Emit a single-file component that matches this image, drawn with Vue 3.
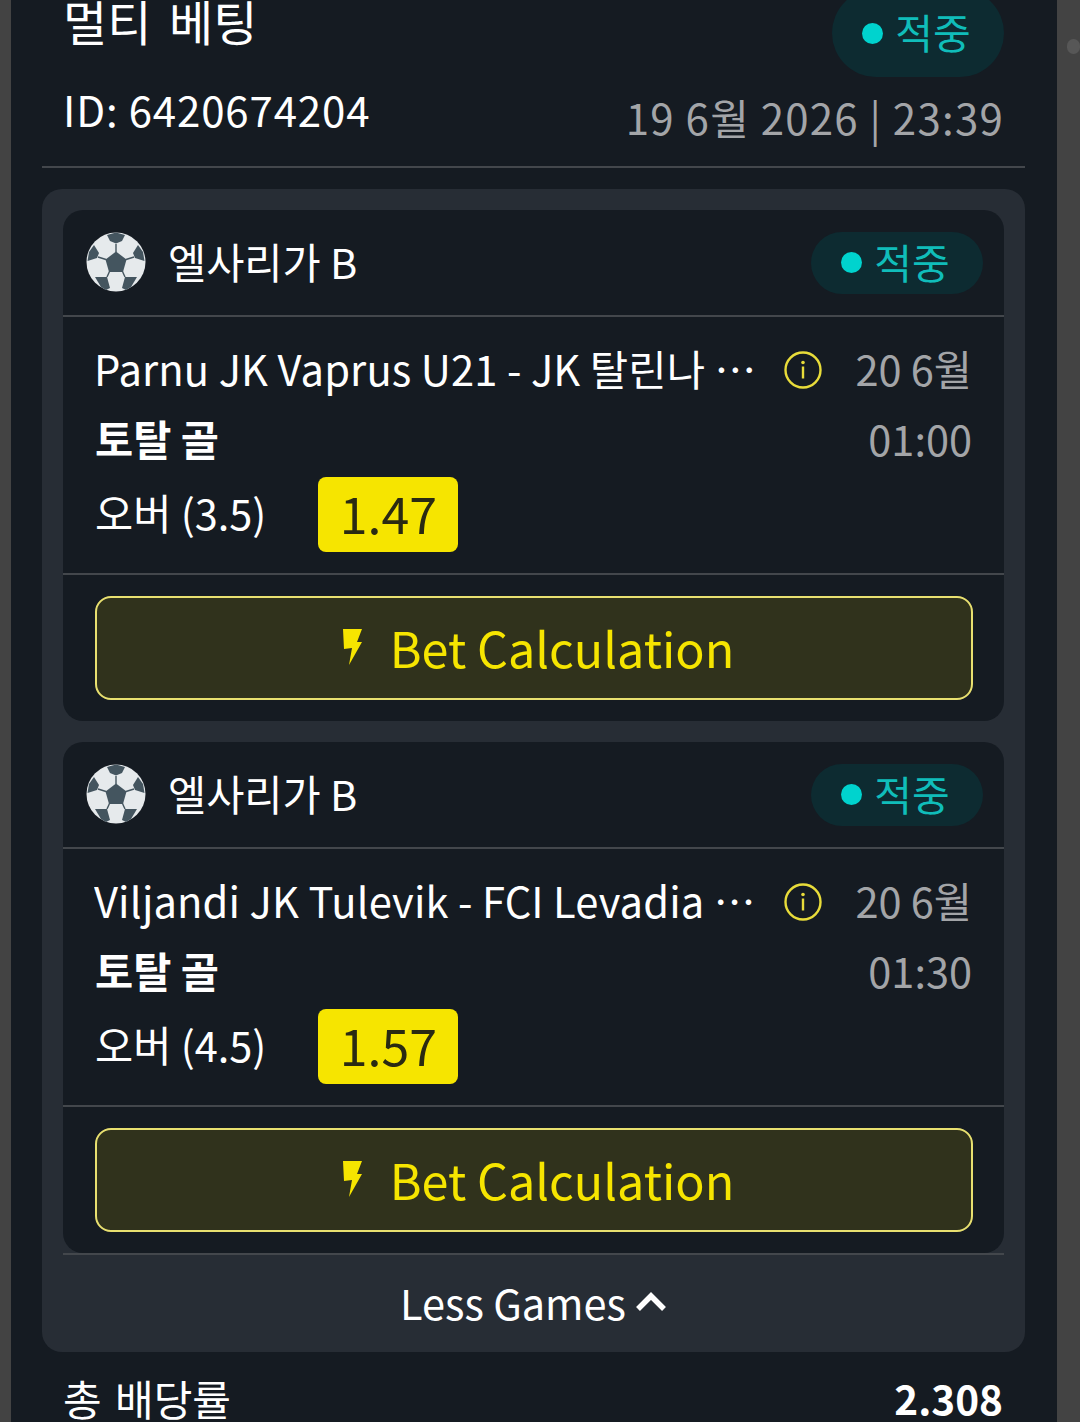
<template>
  <div class="page">
    <div class="panel">
      <div class="head">
        <div class="head-top">
          <h2 class="title">멀티 베팅</h2>
          <div class="status status-big"><span class="dot"></span>적중</div>
        </div>
        <div class="head-bottom">
          <span class="bet-id">ID: 6420674204</span>
          <span class="bet-date">19 6월 2026 | 23:39</span>
        </div>
      </div>

      <div class="games">
        <div v-for="game in games" :key="game.name" class="game">
          <div class="game-head">
            <svg class="ball" viewBox="-30 -30 60 60">
              <circle r="29.5" fill="#e6eaec" />
              <g fill="#44555f">
                <polygon points="0,-10.5 10.5,-2.5 7,10 -7,10 -10.5,-2.5" />
                <polygon points="-9,-27 0,-29.5 9,-27 6,-21 0,-18.5 -6,-21" />
                <polygon points="-28.5,-1 -27,-10 -22,-17 -17,-9 -19,-4" />
                <polygon points="28.5,-1 27,-10 22,-17 17,-9 19,-4" />
                <polygon points="-21,15 -9,15 -6,26 -10,28 -15,25" />
                <polygon points="21,15 9,15 6,26 10,28 15,25" />
              </g>
              <g stroke="#44555f" stroke-width="1.4">
                <line x1="0" y1="-18" x2="0" y2="-10" />
                <line x1="-10" y1="-2.5" x2="-18" y2="-5" />
                <line x1="10" y1="-2.5" x2="18" y2="-5" />
                <line x1="-6.5" y1="9.5" x2="-9" y2="15" />
                <line x1="6.5" y1="9.5" x2="9" y2="15" />
              </g>
            </svg>
            <span class="league">엘사리가 B</span>
            <div class="status"><span class="dot"></span>적중</div>
          </div>

          <div class="game-body">
            <div class="game-info">
              <div class="name-row">
                <span class="name">{{ game.name }}</span>
                <svg class="info" viewBox="0 0 38 38">
                  <circle cx="19" cy="19" r="17.5" fill="none" stroke="#e8dc3a" stroke-width="2.4" />
                  <circle cx="19" cy="11.5" r="1.8" fill="#e8dc3a" />
                  <rect x="17.8" y="15.5" width="2.4" height="12" fill="#e8dc3a" />
                </svg>
              </div>
              <div class="market">토탈 골</div>
              <div class="pick-row">
                <span class="pick">{{ game.pick }}</span>
                <span class="odds">{{ game.odds }}</span>
              </div>
            </div>
            <div class="game-time">
              <span>20 6월</span>
              <span>{{ game.time }}</span>
            </div>
          </div>

          <div class="game-foot">
            <button class="calc-btn">
              <svg class="bolt" viewBox="0 0 20 36">
                <polygon points="0,0 19,0 14,13 19,13 6,36 9,19 1,20" fill="#f6e500" />
              </svg>
              Bet Calculation
            </button>
          </div>
        </div>

        <div class="less">
          <span>Less Games</span>
          <svg class="chevron" viewBox="0 0 30 20">
            <polyline points="2,17 15,4 28,17" fill="none" stroke="#fff" stroke-width="5.5" />
          </svg>
        </div>
      </div>

      <div class="total">
        <span class="total-label">총 배당률</span>
        <b>2.308</b>
      </div>
    </div>
    <div class="scroll-dot"></div>
  </div>
</template>

<script setup>
const games = [
  { name: 'Parnu JK Vaprus U21 - JK 탈린나 칼레', pick: '오버 (3.5)', odds: '1.47', time: '01:00' },
  { name: 'Viljandi JK Tulevik - FCI Levadia U21', pick: '오버 (4.5)', odds: '1.57', time: '01:30' }
]
</script>

<style scoped>
.page {
  width: 1080px;
  height: 1422px;
  overflow: hidden;
  position: relative;
  background: #434343;
  padding-left: 11px;
  box-sizing: border-box;
  font-family: "Noto Sans CJK KR", "Noto Sans", sans-serif;
  color: #fff;
}
.panel {
  width: 1046px;
  height: 1422px;
  background: #151b22;
  padding: 0 32px 0 31px;
  box-sizing: border-box;
}
.head {
  border-bottom: 2px solid #43474c;
  padding: 0 21px 0 21px;
  height: 168px;
  box-sizing: border-box;
}
.head-top {
  display: flex;
  justify-content: space-between;
  align-items: flex-start;
}
.title {
  margin: -13px 0 0;
  font-size: 48px;
  font-weight: 400;
  line-height: 66px;
  word-spacing: 7px;
}
.head-bottom {
  display: flex;
  justify-content: space-between;
  align-items: flex-start;
  margin-top: 6px;
  font-size: 42px;
  line-height: 52px;
}
.bet-id {
  letter-spacing: 0.85px;
}
.bet-date {
  color: #a3a5a8;
  letter-spacing: 1.25px;
  margin-top: 8px;
}
.status {
  width: 172px;
  height: 62px;
  border-radius: 31px;
  background: #0d2b31;
  color: #10bdba;
  display: flex;
  align-items: center;
  justify-content: center;
  gap: 12px;
  font-size: 41px;
  margin-left: auto;
  padding-bottom: 4px;
  box-sizing: border-box;
}
.status-big {
  height: 88px;
  border-radius: 44px;
  margin-top: -11px;
}
.dot {
  width: 21px;
  height: 21px;
  border-radius: 50%;
  background: #00d3ce;
  margin-left: -3px;
  margin-top: 4px;
}
.games {
  margin-top: 21px;
  background: #272d35;
  border-radius: 20px;
  padding: 21px 21px 0;
  height: 1163px;
  box-sizing: border-box;
}
.game {
  background: #151b22;
  border-radius: 20px;
  height: 511px;
  margin-bottom: 21px;
}
.game:nth-child(2) {
  margin-bottom: 0;
}
.game-head {
  display: flex;
  align-items: center;
  height: 107px;
  box-sizing: border-box;
  padding: 0 21px 0 23px;
  border-bottom: 2px solid #43474c;
}
.ball {
  width: 60px;
  height: 60px;
  margin-right: 22px;
  margin-bottom: 2px;
}
.league {
  font-size: 41.5px;
  margin-bottom: 3px;
}
.game-body {
  display: flex;
  justify-content: space-between;
  height: 258px;
  box-sizing: border-box;
  padding: 16px 32px 0 31px;
  border-bottom: 2px solid #43474c;
  font-size: 41.5px;
}
.game-info {
  display: flex;
  flex-direction: column;
}
.name-row {
  display: flex;
  align-items: center;
  height: 70px;
  gap: 22px;
}
.name {
  width: 668px;
  font-size: 41.7px;
  letter-spacing: 0.1px;
  overflow: hidden;
  white-space: nowrap;
  text-overflow: ellipsis;
}
.info {
  width: 38px;
  height: 38px;
  margin-top: 3px;
}
.market {
  font-weight: 700;
  height: 70px;
  line-height: 70px;
  padding-left: 1px;
}
.pick-row {
  display: flex;
  align-items: center;
  gap: 52px;
  margin-top: 4px;
}
.pick {
  margin: -5px 0 0 1px;
}
.odds {
  width: 140px;
  height: 75px;
  background: #f6e500;
  border-radius: 8px;
  color: #2a2a12;
  font-size: 50px;
  display: flex;
  align-items: center;
  justify-content: center;
  padding-bottom: 5px;
  box-sizing: border-box;
}
.game-time {
  display: flex;
  flex-direction: column;
  align-items: flex-end;
  color: #a3a5a8;
}
.game-time span {
  height: 70px;
  line-height: 70px;
}
.game-foot {
  padding: 21px 31px 0 32px;
}
.calc-btn {
  width: 100%;
  height: 104px;
  box-sizing: border-box;
  border: 2px solid #e8e070;
  border-radius: 16px;
  background: #30321c;
  color: #f6e500;
  font-family: inherit;
  font-size: 48.5px;
  display: flex;
  align-items: center;
  justify-content: center;
  gap: 27px;
  padding: 0 0 2px 9px;
}
.bolt {
  width: 20px;
  height: 36px;
  margin-top: 0;
}
.less {
  border-top: 2px solid #43474c;
  height: 98px;
  display: flex;
  align-items: center;
  justify-content: center;
  gap: 10px;
  font-size: 41.5px;
  padding: 0 1px 2px 0;
  box-sizing: border-box;
}
.chevron {
  width: 30px;
  height: 20px;
}
.total {
  display: flex;
  justify-content: space-between;
  align-items: center;
  margin-top: 20px;
  padding: 0 22px 0 21px;
  font-size: 42px;
  line-height: 52px;
}
.total-label {
  word-spacing: 4px;
}
.total b {
  font-size: 40.5px;
}
.scroll-dot {
  position: absolute;
  left: 1067px;
  top: 39px;
  width: 13px;
  height: 15px;
  border-radius: 7px;
  background: #575757;
}
</style>
